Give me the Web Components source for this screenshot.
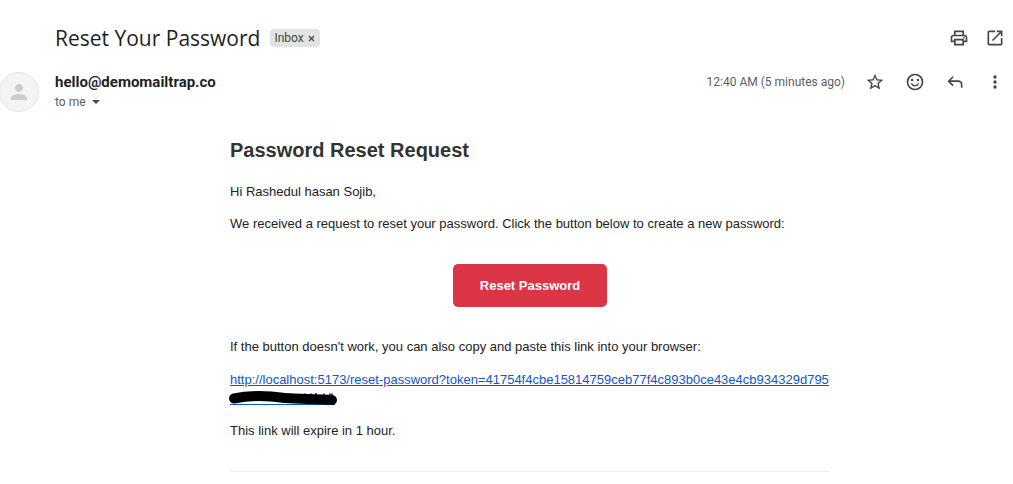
<!DOCTYPE html>
<html lang="en">
<head>
<meta charset="utf-8">
<title>Reset Your Password</title>
<style>
body { margin: 0; background: #fff; font-family: Roboto, Arial, sans-serif; color: #1f1f1f; }
</style>
</head>
<body>
<mail-view></mail-view>

<template id="mail-view">
<style>
:host { display: block; }
</style>
<mail-subject label="Inbox">Reset Your Password</mail-subject>
<mail-sender when="12:40 AM (5 minutes ago)">hello@demomailtrap.co</mail-sender>
<mail-message></mail-message>
</template>

<template id="mail-icon">
<style>
:host { display: block; width: 20px; height: 20px; }
:host([name="person"]) { width: 24px; height: 24px; }
svg { display: block; width: 100%; height: 100%; fill: currentColor; }
</style>
<svg viewBox="0 0 24 24" aria-hidden="true"><path/></svg>
</template>

<template id="mail-subject">
<style>
:host { display: flex; align-items: center; padding: 24px 8px 0 55px; }
h1 { margin: 0; font: 400 21px/28px "Open Sans", sans-serif; }
.label { display: flex; align-items: center; margin-left: 10px; height: 18px; padding: 0 4px; border-radius: 4px; background: #e1e3e1; color: #444746; font: 12px/18px Roboto, sans-serif; }
.label button { width: 8px; margin-left: 4px; }
.tools { display: flex; gap: 16px; margin-left: auto; }
button { display: block; padding: 0; border: 0; background: none; color: #444746; }
svg { display: block; width: 8px; height: 8px; }
</style>
<h1><slot></slot></h1>
<div class="label"><span></span><button aria-label="Remove label"><svg viewBox="0 0 8 8" stroke="currentColor" stroke-width="1.2"><path d="M1 2l5 5M6 2L1 7"/></svg></button></div>
<div class="tools">
<button aria-label="Print all"><mail-icon name="print"></mail-icon></button>
<button aria-label="In new window"><mail-icon name="open"></mail-icon></button>
</div>
</template>

<template id="mail-sender">
<style>
:host { display: flex; align-items: flex-start; padding: 20px 8px 0 0; }
.avatar { box-sizing: border-box; width: 40px; height: 40px; margin: 0 16px 0 -1px; border: 1px solid #e4e4e4; border-radius: 50%; background: #f4f4f4; display: grid; place-items: center; color: #ccc; }
.who { font: 700 15px/20px Roboto, sans-serif; }
.to { display: flex; align-items: center; gap: 6px; font: 12px/20px Roboto, sans-serif; color: #5e5e5e; padding: 0; border: 0; background: none; }
.to i { border: 4px solid transparent; border-top-color: #444746; border-bottom: 0; }
.tools { display: flex; align-items: center; gap: 20px; margin-left: auto; color: #444746; }
.tools button { display: block; padding: 0; border: 0; background: none; color: inherit; }
time { font: 12px/20px Roboto, sans-serif; color: #5e5e5e; }
</style>
<div class="avatar"><mail-icon name="person"></mail-icon></div>
<div><div class="who"><slot></slot></div><button class="to">to me <i></i></button></div>
<div class="tools"><time></time>
<button aria-label="Star"><mail-icon name="star"></mail-icon></button>
<button aria-label="Add reaction"><mail-icon name="smile"></mail-icon></button>
<button aria-label="Reply"><mail-icon name="reply"></mail-icon></button>
<button aria-label="More"><mail-icon name="more"></mail-icon></button>
</div>
</template>

<template id="mail-message">
<style>
:host { display: block; max-width: 600px; margin: 0 auto; padding: 24px 8px 0 55px; font: 13px/20px "Liberation Sans", Arial, sans-serif; color: #222; }
h2 { margin: 0; font-size: 20px; line-height: 28px; color: #333; }
p { margin: 12px 0; }
h2 + p { margin-top: 18px; }
.action { display: flex; justify-content: center; padding: 18px 0; }
.action button { padding: 12px 27px; border: 0; border-radius: 5px; background: #dc3545; color: #fff; font: 700 13px/19px "Liberation Sans", Arial, sans-serif; }
a { display: block; line-height: 22px; color: #15c; overflow-wrap: anywhere; }
.hidden { display: block; width: 108px; height: 18px; overflow: visible; }
hr { margin: 30px 0; border: 0; border-top: 1px solid #eee; }
</style>
<h2>Password Reset Request</h2>
<p>Hi Rashedul hasan Sojib,</p>
<p>We received a request to reset your password. Click the button below to create a new password:</p>
<div class="action"><button>Reset Password</button></div>
<p>If the button doesn't work, you can also copy and paste this link into your browser:</p>
<p><a href="#">http://localhost:5173/reset-password?token=41754f4cbe15814759ceb77f4c893b0ce43e4cb934329d795<svg class="hidden" viewBox="0 0 108 18" aria-hidden="true"><path d="M0 13.500H105" stroke="#15c"/><path d="M56 3.500h5M74 3.500h2M80 3.500h2M86 2v3M93 3.500h2M99 3.500h4" stroke="#15c" stroke-width="2"/><path d="M4 7.500C20 4 40 5 55 7C70 8 85 8 102 9" fill="none" stroke="#000" stroke-width="10" stroke-linecap="round"/></svg></a></p>
<p>This link will expire in 1 hour.</p>
<hr>
</template>

<script>
const ICONS = {
  print: 'M16 8V5H8v3H6V3h12v5h-2zM4 10h16H4zm14 2.500q.425 0 .713-.288T19 11.500t-.288-.712T18 10.500t-.712.288T17 11.500t.288.712.712.288zM16 19v-4H8v4h8zm2 2H6v-4H2v-6q0-1.275.875-2.137T5 8h14q1.275 0 2.138.863T22 11v6h-4v4zm2-6v-4q0-.425-.288-.712T19 10H5q-.425 0-.712.288T4 11v4h2v-2h12v2h2z',
  open: 'M5 21q-.825 0-1.412-.587T3 19V5q0-.825.588-1.412T5 3h7v2H5v14h14v-7h2v7q0 .825-.587 1.413T19 21H5zm4.700-5.300-1.400-1.400L17.600 5H14V3h7v7h-2V6.400l-9.300 9.300z',
  person: 'M12 12c2.210 0 4-1.790 4-4s-1.790-4-4-4-4 1.790-4 4 1.790 4 4 4zm0 2c-2.670 0-8 1.340-8 4v2h16v-2c0-2.660-5.330-4-8-4z',
  star: 'M22 9.240l-7.190-.62L12 2 9.190 8.630 2 9.240l5.460 4.730L5.820 21 12 17.270 18.180 21l-1.630-7.030L22 9.240zM12 15.400l-3.760 2.270 1-4.280-3.320-2.880 4.380-.38L12 6.100l1.710 4.040 4.380.38-3.320 2.880 1 4.280L12 15.400z',
  smile: 'M12 2a10 10 0 1 0 0 20 10 10 0 0 0 0-20zm0 18a8 8 0 1 1 0-16 8 8 0 0 1 0 16zM8.500 8A1.500 1.500 0 1 0 8.500 11 1.500 1.500 0 0 0 8.500 8zM15.500 8A1.500 1.500 0 1 0 15.500 11 1.500 1.500 0 0 0 15.500 8zM7 13.500C7.700 15.800 9.600 17.500 12 17.500s4.300-1.700 5-4h-1.700C14.700 15 13.500 15.900 12 15.900S9.300 15 8.700 13.500H7z',
  reply: 'M19 19v-4q0-1.250-.875-2.125T16 12H6.825l3.600 3.600L9 17l-6-6 6-6 1.425 1.400-3.600 3.600H16q2.075 0 3.538 1.463T21 15v4h-2z',
  more: 'M12 8a2 2 0 1 0 0-4 2 2 0 0 0 0 4zm0 2a2 2 0 1 0 0 4 2 2 0 0 0 0-4zm0 6a2 2 0 1 0 0 4 2 2 0 0 0 0-4z'
};

class MailElement extends HTMLElement {
  constructor() {
    super();
    this.attachShadow({ mode: 'open' });
    this.shadowRoot.append(document.getElementById(this.localName).content.cloneNode(true));
  }
}
customElements.define('mail-icon', class extends MailElement {
  connectedCallback() { this.shadowRoot.querySelector('path').setAttribute('d', ICONS[this.getAttribute('name')]); }
});
customElements.define('mail-subject', class extends MailElement {
  connectedCallback() { this.shadowRoot.querySelector('span').textContent = this.getAttribute('label'); }
});
customElements.define('mail-sender', class extends MailElement {
  connectedCallback() { this.shadowRoot.querySelector('time').textContent = this.getAttribute('when'); }
});
customElements.define('mail-message', class extends MailElement {});
customElements.define('mail-view', class extends MailElement {});
</script>
</body>
</html>
